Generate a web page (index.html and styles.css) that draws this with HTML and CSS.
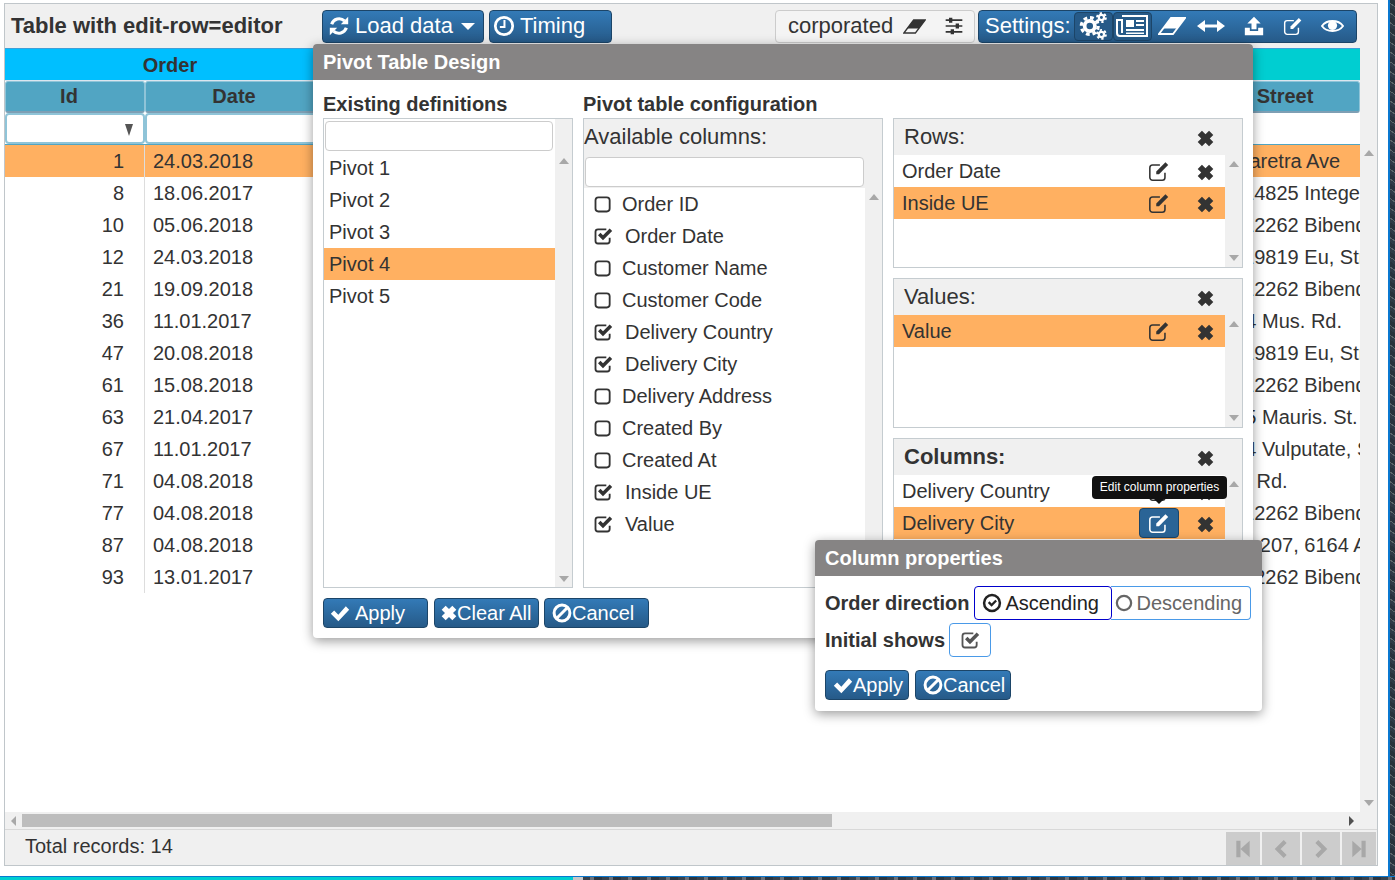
FILE: index.html
```html
<!DOCTYPE html>
<html>
	<head>
		<meta http-equiv="Content-Type" content="text/html; charset=UTF-8" />
		<title>Table with edit-row=editor</title>
		<link rel="stylesheet" href="styles.css">
	</head>

	<body>
		<svg class="defs" xmlns="http://www.w3.org/2000/svg">
			<symbol id="i-x" viewBox="0 0 24 24"><path d="M1 7l6-6 5 5 5-5 6 6-5 5 5 5-6 6-5-5-5 5-6-6 5-5z" fill="currentColor"/></symbol>
			<symbol id="i-edit" viewBox="0 0 24 24"><path d="M18.500 14v5a3 3 0 0 1-3 3H5a3 3 0 0 1-3-3V8.500a3 3 0 0 1 3-3h8" fill="none" stroke="currentColor" stroke-width="1.700"/><path d="M9 12.500L19 2.500l3 3-10 10H9z" fill="currentColor"/></symbol>
			<symbol id="i-check" viewBox="0 0 24 24"><path d="M1 13l4-4 5 5L19 4l4 4-13 14z" fill="currentColor"/></symbol>
			<symbol id="i-ban" viewBox="0 0 24 24"><circle cx="12" cy="12" r="9.500" fill="none" stroke="currentColor" stroke-width="3.600"/><path d="M6 18L18 6" stroke="currentColor" stroke-width="3.600"/></symbol>
			<symbol id="i-refresh" viewBox="0 0 24 24"><path d="M4 10a8.500 8.500 0 0 1 14-3.500" fill="none" stroke="currentColor" stroke-width="3.400"/><path d="M22 2v8h-8z" fill="currentColor"/><path d="M20 14a8.500 8.500 0 0 1-14 3.500" fill="none" stroke="currentColor" stroke-width="3.400"/><path d="M2 22v-8h8z" fill="currentColor"/></symbol>
			<symbol id="i-clock" viewBox="0 0 24 24"><circle cx="12" cy="12" r="9.500" fill="none" stroke="currentColor" stroke-width="3"/><path d="M12.500 5.500v7.500H7.500" fill="none" stroke="currentColor" stroke-width="2.200"/></symbol>
			<symbol id="i-eraser" viewBox="0 0 28 18"><path d="M13 1h14L15 17H1z" fill="none" stroke="currentColor" stroke-width="1.800"/><path d="M13 1h14l-8 10.500H5z" fill="currentColor"/></symbol>
			<symbol id="i-sliders" viewBox="0 0 24 24"><path d="M2 5h20M2 12h20M2 19h20" stroke="currentColor" stroke-width="2"/><path d="M6 2h4v6H6zM14 9h4v6h-4zM8 16h4v6H8z" fill="currentColor"/></symbol>
			<symbol id="i-cogs" viewBox="0 0 30 30"><circle cx="11" cy="15" r="5.500" fill="none" stroke="currentColor" stroke-width="4"/><circle cx="11" cy="15" r="9" fill="none" stroke="currentColor" stroke-width="3.500" stroke-dasharray="4 3.070"/><circle cx="23.500" cy="6" r="2.800" fill="none" stroke="currentColor" stroke-width="2.400"/><circle cx="23.500" cy="6" r="4.800" fill="none" stroke="currentColor" stroke-width="2" stroke-dasharray="2.500 2.530"/><circle cx="23.500" cy="24" r="2.800" fill="none" stroke="currentColor" stroke-width="2.400"/><circle cx="23.500" cy="24" r="4.800" fill="none" stroke="currentColor" stroke-width="2" stroke-dasharray="2.500 2.530"/></symbol>
			<symbol id="i-news" viewBox="0 0 32 24"><path d="M6 2h25v20H4a3 3 0 0 1-3-3V6h5v13" fill="none" stroke="currentColor" stroke-width="2"/><path d="M10 6h8v7h-8zM20 6h8v2h-8zM20 10h8v2h-8zM10 15h18v2H10zM10 18.500h18v1.500H10z" fill="currentColor"/></symbol>
			<symbol id="i-arrows" viewBox="0 0 28 16"><path d="M6 8h16" stroke="currentColor" stroke-width="3"/><path d="M8 2L0 8l8 6zM20 2l8 6-8 6z" fill="currentColor"/></symbol>
			<symbol id="i-upload" viewBox="0 0 24 24"><path d="M12 1l8 8h-5v7H9V9H4z" fill="currentColor"/><path d="M1 14h6v4h10v-4h6v9H1z" fill="currentColor"/></symbol>
			<symbol id="i-eye" viewBox="0 0 24 16"><path d="M1 8C6 1 18 1 23 8C18 15 6 15 1 8z" fill="none" stroke="currentColor" stroke-width="2"/><circle cx="12" cy="7.500" r="4.800" fill="currentColor"/></symbol>
			<symbol id="i-first" viewBox="0 0 20 24"><path d="M2 2h5v20H2zM18 2v20L7 12z" fill="currentColor"/></symbol>
			<symbol id="i-prev" viewBox="0 0 20 24"><path d="M15 3L6 12l9 9" fill="none" stroke="currentColor" stroke-width="5"/></symbol>
			<symbol id="i-next" viewBox="0 0 20 24"><path d="M5 3l9 9-9 9" fill="none" stroke="currentColor" stroke-width="5"/></symbol>
			<symbol id="i-last" viewBox="0 0 20 24"><path d="M13 2h5v20h-5zM2 2v20l11-10z" fill="currentColor"/></symbol>
			<symbol id="i-square" viewBox="0 0 24 24"><rect x="3" y="4" width="17" height="17" rx="3.500" fill="none" stroke="currentColor" stroke-width="2.200"/></symbol>
			<symbol id="i-checked" viewBox="0 0 24 24"><path d="M20 14v4a3 3 0 0 1-3 3H6a3 3 0 0 1-3-3V7a3 3 0 0 1 3-3h10" fill="none" stroke="currentColor" stroke-width="2.200"/><path d="M6 11l3-3 3 3 8-8 3 3-11 11z" fill="currentColor"/></symbol>
			<symbol id="i-circle-check" viewBox="0 0 24 24"><circle cx="12" cy="12" r="9.500" fill="none" stroke="currentColor" stroke-width="3"/><path d="M7 12l2-2 2.500 2.500L16 8l2 2-6.500 6.500z" fill="currentColor"/></symbol>
			<symbol id="i-circle" viewBox="0 0 24 24"><circle cx="12" cy="12" r="9.500" fill="none" stroke="currentColor" stroke-width="3"/></symbol>
		</svg>

		<div class="window">
			<div class="panel">
				<div class="toolbar">
					<div class="title">Table with edit-row=editor</div>
					<button class="btn btn-load"><svg class="ico"><use href="#i-refresh"/></svg>Load data<span class="caret"></span></button>
					<button class="btn btn-timing"><svg class="ico"><use href="#i-clock"/></svg>Timing</button>
					<div class="filter-box">
						<span class="filter-text">corporated</span>
						<svg class="ico ico-rub"><use href="#i-eraser"/></svg>
						<svg class="ico"><use href="#i-sliders"/></svg>
					</div>
					<div class="settings">
						<span class="settings-label">Settings:</span>
						<span class="tool active"><svg class="ico ico-cogs"><use href="#i-cogs"/></svg></span>
						<span class="tool active"><svg class="ico ico-news"><use href="#i-news"/></svg></span>
						<span class="tool t-eraser"><svg class="ico ico-eraser"><use href="#i-eraser"/></svg></span>
						<span class="tool t-arrows"><svg class="ico ico-wide"><use href="#i-arrows"/></svg></span>
						<span class="tool t-upload"><svg class="ico"><use href="#i-upload"/></svg></span>
						<span class="tool t-edit"><svg class="ico"><use href="#i-edit"/></svg></span>
						<span class="tool t-eye"><svg class="ico ico-eye"><use href="#i-eye"/></svg></span>
					</div>
				</div>

				<div class="content">
					<div class="table-wrap">
						<table class="grid">
							<colgroup>
								<col class="c-id"><col class="c-date"><col class="c-gap"><col class="c-fill"><col class="c-street">
							</colgroup>
							<thead>
								<tr class="band">
									<th colspan="3" class="band-order">Order</th>
									<th colspan="2" class="band-delivery"></th>
								</tr>
								<tr class="head">
									<th class="head-id">Id</th><th>Date</th><th colspan="2"></th><th>Street</th>
								</tr>
								<tr class="filters">
									<td><span class="filter-cell"><span class="arrow-down"></span></span></td>
									<td><span class="filter-cell"></span></td>
									<td colspan="2"></td>
									<td></td>
								</tr>
							</thead>
							<tbody>
								<tr class="sel"><td class="id">1</td><td class="date">24.03.2018</td><td colspan="2"></td><td class="street">Viaretra Ave</td></tr>
								<tr><td class="id">8</td><td class="date">18.06.2017</td><td colspan="2"></td><td class="street">#14825 Integer Rd.</td></tr>
								<tr><td class="id">10</td><td class="date">05.06.2018</td><td colspan="2"></td><td class="street">#12262 Bibendum St.</td></tr>
								<tr><td class="id">12</td><td class="date">24.03.2018</td><td colspan="2"></td><td class="street">#19819 Eu, Street</td></tr>
								<tr><td class="id">21</td><td class="date">19.09.2018</td><td colspan="2"></td><td class="street">#12262 Bibendum St.</td></tr>
								<tr><td class="id">36</td><td class="date">11.01.2017</td><td colspan="2"></td><td class="street">A4 Mus. Rd.</td></tr>
								<tr><td class="id">47</td><td class="date">20.08.2018</td><td colspan="2"></td><td class="street">#19819 Eu, Street</td></tr>
								<tr><td class="id">61</td><td class="date">15.08.2018</td><td colspan="2"></td><td class="street">#12262 Bibendum St.</td></tr>
								<tr><td class="id">63</td><td class="date">21.04.2017</td><td colspan="2"></td><td class="street">A5 Mauris. St.</td></tr>
								<tr><td class="id">67</td><td class="date">11.01.2017</td><td colspan="2"></td><td class="street">A4 Vulputate, Street</td></tr>
								<tr><td class="id">71</td><td class="date">04.08.2018</td><td colspan="2"></td><td class="street">Hi Rd.</td></tr>
								<tr><td class="id">77</td><td class="date">04.08.2018</td><td colspan="2"></td><td class="street">#12262 Bibendum St.</td></tr>
								<tr><td class="id">87</td><td class="date">04.08.2018</td><td colspan="2"></td><td class="street">12.207, 6164 Ave</td></tr>
								<tr><td class="id">93</td><td class="date">13.01.2017</td><td colspan="2"></td><td class="street">#12262 Bibendum St.</td></tr>
							</tbody>
						</table>
					</div>
					<div class="vscroll"><span class="arrow-up"></span><span class="arrow-down"></span></div>
				</div>

				<div class="hscroll">
					<span class="arrow-left"></span>
					<span class="thumb"></span>
					<span class="arrow-right"></span>
				</div>

				<div class="footer">
					<span class="total">Total records: 14</span>
					<div class="pager">
						<span class="page-btn p-first"><svg class="ico"><use href="#i-first"/></svg></span>
						<span class="page-btn p-prev"><svg class="ico"><use href="#i-prev"/></svg></span>
						<span class="page-btn p-next"><svg class="ico"><use href="#i-next"/></svg></span>
						<span class="page-btn p-last"><svg class="ico"><use href="#i-last"/></svg></span>
					</div>
				</div>
			</div>

			<!-- pivot dialog -->
			<div class="dialog pivot">
				<div class="dialog-title">Pivot Table Design</div>
				<div class="pivot-body">
					<div class="col-existing">
						<h4>Existing definitions</h4>
						<div class="box existing">
							<div class="box-main">
								<input class="search" type="text" />
								<div class="item">Pivot 1</div>
								<div class="item">Pivot 2</div>
								<div class="item">Pivot 3</div>
								<div class="item sel">Pivot 4</div>
								<div class="item">Pivot 5</div>
							</div>
							<div class="box-scroll"><span class="arrow-up"></span><span class="arrow-down"></span></div>
						</div>
					</div>
					<div class="col-config">
						<h4>Pivot table configuration</h4>
						<div class="config">
							<div class="box available">
								<div class="box-head">Available columns:</div>
								<input class="search" type="text" />
								<div class="avail-body">
									<div class="box-main">
										<div class="opt"><svg class="ico"><use href="#i-square"/></svg>Order ID</div>
										<div class="opt on"><svg class="ico"><use href="#i-checked"/></svg>Order Date</div>
										<div class="opt"><svg class="ico"><use href="#i-square"/></svg>Customer Name</div>
										<div class="opt"><svg class="ico"><use href="#i-square"/></svg>Customer Code</div>
										<div class="opt on"><svg class="ico"><use href="#i-checked"/></svg>Delivery Country</div>
										<div class="opt on"><svg class="ico"><use href="#i-checked"/></svg>Delivery City</div>
										<div class="opt"><svg class="ico"><use href="#i-square"/></svg>Delivery Address</div>
										<div class="opt"><svg class="ico"><use href="#i-square"/></svg>Created By</div>
										<div class="opt"><svg class="ico"><use href="#i-square"/></svg>Created At</div>
										<div class="opt on"><svg class="ico"><use href="#i-checked"/></svg>Inside UE</div>
										<div class="opt on"><svg class="ico"><use href="#i-checked"/></svg>Value</div>
									</div>
									<div class="box-scroll"><span class="arrow-up"></span></div>
								</div>
							</div>
							<div class="zones">
								<div class="box zone">
									<div class="zone-head">Rows:<svg class="ico ico-x"><use href="#i-x"/></svg></div>
									<div class="zone-body">
										<div class="box-main">
											<div class="zone-row"><span class="zone-label">Order Date</span><span class="edit-btn"><svg class="ico"><use href="#i-edit"/></svg></span><svg class="ico ico-x"><use href="#i-x"/></svg></div>
											<div class="zone-row sel"><span class="zone-label">Inside UE</span><span class="edit-btn"><svg class="ico"><use href="#i-edit"/></svg></span><svg class="ico ico-x"><use href="#i-x"/></svg></div>
										</div>
										<div class="box-scroll"><span class="arrow-up"></span><span class="arrow-down"></span></div>
									</div>
								</div>
								<div class="box zone">
									<div class="zone-head">Values:<svg class="ico ico-x"><use href="#i-x"/></svg></div>
									<div class="zone-body">
										<div class="box-main">
											<div class="zone-row sel"><span class="zone-label">Value</span><span class="edit-btn"><svg class="ico"><use href="#i-edit"/></svg></span><svg class="ico ico-x"><use href="#i-x"/></svg></div>
										</div>
										<div class="box-scroll"><span class="arrow-up"></span><span class="arrow-down"></span></div>
									</div>
								</div>
								<div class="box zone">
									<div class="zone-head strong">Columns:<svg class="ico ico-x"><use href="#i-x"/></svg></div>
									<div class="zone-body">
										<div class="box-main">
											<div class="zone-row"><span class="zone-label">Delivery Country</span><span class="edit-btn"><svg class="ico"><use href="#i-edit"/></svg></span><svg class="ico ico-x"><use href="#i-x"/></svg></div>
											<div class="zone-row sel"><span class="zone-label">Delivery City</span><span class="edit-btn hot"><svg class="ico"><use href="#i-edit"/></svg></span><svg class="ico ico-x"><use href="#i-x"/></svg></div>
										</div>
										<div class="box-scroll"><span class="arrow-up"></span></div>
									</div>
								</div>
							</div>
						</div>
					</div>
				</div>
				<div class="actions">
					<button class="btn btn-sm b-apply"><svg class="ico"><use href="#i-check"/></svg>Apply</button>
					<button class="btn btn-sm b-clear"><svg class="ico"><use href="#i-x"/></svg>Clear All</button>
					<button class="btn btn-sm b-cancel"><svg class="ico"><use href="#i-ban"/></svg>Cancel</button>
				</div>
			</div>

			<div class="tooltip">Edit column properties</div>

			<!-- column properties -->
			<div class="dialog props">
				<div class="dialog-title">Column properties</div>
				<div class="props-body">
					<div class="prop-row">
						<b>Order direction</b>
						<div class="segment">
							<span class="seg seg-on"><svg class="ico"><use href="#i-circle-check"/></svg>Ascending</span>
							<span class="seg seg-off"><svg class="ico"><use href="#i-circle"/></svg>Descending</span>
						</div>
					</div>
					<div class="prop-row prop-shows">
						<b>Initial shows</b>
						<span class="toggle"><svg class="ico"><use href="#i-checked"/></svg></span>
					</div>
					<div class="prop-actions">
						<button class="btn btn-sm p-apply"><svg class="ico"><use href="#i-check"/></svg>Apply</button>
						<button class="btn btn-sm p-cancel"><svg class="ico"><use href="#i-ban"/></svg>Cancel</button>
					</div>
				</div>
			</div>
		</div>

		<div class="strip"><span class="strip-teal"></span><span class="strip-gray"></span><span class="strip-dark"></span></div>
	</body>
</html>
```

FILE: styles.css
```css
html, body {
	margin: 0;
	height: 880px;
	overflow: hidden;
}
body {
	background: repeating-linear-gradient(35deg, #2f3a46 0 3px, #5c666a 3px 4px, #28323c 4px 8px);
	color: #333;
	font-family: "Liberation Sans", Arial, sans-serif;
	font-size: 20px;
}
.defs {
	display: none;
}
.ico {
	display: block;
	flex: none;
	width: 20px;
	height: 20px;
}

/* window */
.window {
	position: relative;
	box-sizing: border-box;
	width: 1390px;
	height: 876px;
	padding: 3px 11px 10px 4px;
	background: #fff;
	border-right: 2px solid #0a78d0;
}
.strip {
	display: flex;
	height: 4px;
	border-top: 1px solid #0a78d0;
	box-sizing: border-box;
}
.strip-teal {
	width: 573px;
	background: #00ced1;
}
.strip-gray {
	width: 10px;
	background: #c8c8c8;
}
.strip-dark {
	flex: 1;
	background: repeating-linear-gradient(90deg, #39424c 0 7px, #6b7078 7px 11px, #2c3640 11px 19px);
}

/* panel */
.panel {
	box-sizing: border-box;
	display: flex;
	flex-direction: column;
	width: 1374px;
	height: 863px;
	border: 1px solid #c0c6ca;
}
.toolbar {
	display: flex;
	align-items: center;
	flex: none;
	height: 44px;
	padding: 0 20px 0 6px;
	background: #f0f0f0;
}
.title {
	width: 311px;
	font-size: 22px;
	font-weight: bold;
	white-space: nowrap;
}
.btn {
	display: flex;
	align-items: center;
	box-sizing: border-box;
	height: 33px;
	margin: 0;
	padding: 0;
	background: linear-gradient(#337ab7, #265a88);
	border: 1px solid #1c4568;
	border-radius: 4px;
	color: #fff;
	font-family: inherit;
	font-size: 22px;
}
.btn-load {
	width: 162px;
	padding-left: 5px;
}
.btn-load .ico, .btn-timing .ico {
	width: 22px;
	height: 22px;
	margin-right: 5px;
}
.btn-timing {
	width: 123px;
	margin-left: 5px;
	padding-left: 3px;
}
.caret {
	margin-left: 8px;
	border-top: 7px solid #fff;
	border-left: 7px solid transparent;
	border-right: 7px solid transparent;
}
.filter-box {
	display: flex;
	align-items: center;
	box-sizing: border-box;
	width: 200px;
	height: 33px;
	margin-left: auto;
	padding: 0 10px 0 12px;
	background: #f4f4f4;
	border: 1px solid #ccc;
	border-radius: 4px;
	font-size: 22px;
}
.filter-text {
	margin-right: 10px;
}
.ico-rub {
	width: 23px;
	height: 15px;
}
.filter-box .ico + .ico {
	margin-left: 18px;
}
.settings {
	display: flex;
	align-items: center;
	box-sizing: border-box;
	width: 379px;
	height: 33px;
	margin-left: 3px;
	padding-left: 6px;
	background: linear-gradient(#337ab7, #265a88);
	border: 1px solid #1c4568;
	border-radius: 4px;
	color: #fff;
	font-size: 22px;
}
.settings-label {
	margin-right: 3px;
}
.tool {
	display: flex;
	align-items: center;
	justify-content: center;
	flex: none;
}
.tool.active {
	box-sizing: border-box;
	width: 39px;
	height: 29px;
	background: #265a88;
	border: 1px solid #1c4568;
	border-radius: 4px;
}
.ico-cogs {
	width: 31px;
	height: 28px;
}
.ico-news {
	width: 32px;
	height: 24px;
}
.ico-eraser {
	width: 28px;
	height: 18px;
}
.ico-wide {
	width: 28px;
	height: 16px;
}
.ico-eye {
	width: 23px;
	height: 16px;
}
.t-eraser {
	margin-left: 6px;
}
.t-arrows {
	margin-left: 11px;
}
.t-upload {
	margin-left: 19px;
}
.t-edit {
	margin-left: 19px;
}
.t-eye {
	margin-left: 18px;
}

/* table */
.content {
	display: flex;
	flex: 1;
	min-height: 0;
}
.table-wrap {
	width: 1355px;
	overflow: hidden;
}
.grid {
	width: 1355px;
	table-layout: fixed;
	border-collapse: separate;
	border-spacing: 0;
}
.c-id {
	width: 140px;
}
.c-date {
	width: 178px;
}
.c-gap {
	width: 12px;
}
.c-street {
	width: 150px;
}
.grid th, .grid td {
	height: 32px;
	padding: 0;
	box-sizing: border-box;
	white-space: nowrap;
	overflow: hidden;
}
.grid .band th {
	height: 33px;
	padding-top: 2px;
	border-top: 1px solid #3ea0d8;
	border-bottom: 1px solid #dbe6f0;
}
.band-order {
	background: #00bfff;
	font-weight: bold;
}
.band-delivery {
	background: #00ced1;
}
.head th {
	background: #51a5c3;
	border: 1px solid #8fc4d8;
	border-bottom: 2px solid #7e9fb4;
	border-radius: 3px;
}
.head .head-id {
	padding-right: 12px;
}
.filters td {
	border-bottom: 1px solid #51a5c3;
}
.filter-cell {
	position: relative;
	display: block;
	box-sizing: border-box;
	height: 31px;
	background: #fff;
	border: 2px solid #8fc4d8;
	border-radius: 4px;
}
.filter-cell .arrow-down {
	position: absolute;
	right: 10px;
	top: 9px;
	border-top: 12px solid #555;
	border-left: 4px solid transparent;
	border-right: 4px solid transparent;
}
.grid tbody tr.sel td {
	background: #ffb061;
}
.id {
	padding-right: 20px !important;
	text-align: right;
	border-right: 1px solid #ddd;
}
.date {
	padding-left: 8px !important;
}
.street {
	padding-left: 22px !important;
}

/* scrollbars */
.vscroll {
	display: flex;
	flex-direction: column;
	justify-content: space-between;
	align-items: center;
	box-sizing: border-box;
	width: 17px;
	padding: 102px 0 6px;
	background: #f0f0f0;
}
.arrow-up, .arrow-down {
	display: block;
	border-left: 5px solid transparent;
	border-right: 5px solid transparent;
}
.arrow-up {
	border-bottom: 6px solid #a8a8a8;
}
.arrow-down {
	border-top: 6px solid #a8a8a8;
}
.hscroll {
	position: relative;
	flex: none;
	height: 17px;
	background: #f0f0f0;
}
.thumb {
	position: absolute;
	left: 17px;
	top: 2px;
	width: 810px;
	height: 13px;
	background: #bdbdbd;
}
.arrow-left, .arrow-right {
	position: absolute;
	top: 4px;
	border-top: 5px solid transparent;
	border-bottom: 5px solid transparent;
}
.arrow-left {
	left: 6px;
	border-right: 5px solid #a8a8a8;
}
.arrow-right {
	left: 1344px;
	border-left: 5px solid #505050;
}
.footer {
	display: flex;
	align-items: center;
	justify-content: space-between;
	box-sizing: border-box;
	flex: none;
	height: 36px;
	padding: 0 1px 0 20px;
	background: #f0f0f0;
	border-top: 1px solid #d8d8d8;
}
.total {
	margin-bottom: 2px;
}
.pager {
	display: flex;
	gap: 2px;
	align-self: flex-end;
}
.page-btn {
	display: flex;
	align-items: center;
	justify-content: center;
	height: 33px;
	background: #ccc;
	color: #a8a8a8;
}
.p-first {
	width: 34px;
}
.p-last {
	width: 34px;
}
.p-prev, .p-next {
	width: 38px;
}

/* dialogs */
.dialog {
	position: absolute;
	box-sizing: border-box;
	background: #fff;
	border-radius: 4px;
	box-shadow: 0 3px 12px rgba(0, 0, 0, 0.4);
}
.dialog-title {
	box-sizing: border-box;
	background: #868484;
	color: #fff;
	font-weight: bold;
	border-radius: 4px 4px 0 0;
	padding-left: 10px;
}
.pivot {
	left: 313px;
	top: 44px;
	width: 940px;
	height: 594px;
}
.pivot .dialog-title {
	height: 36px;
	line-height: 36px;
}
.pivot-body {
	display: flex;
	gap: 10px;
	padding: 14px 10px 0;
}
h4 {
	margin: 0 0 4px;
	height: 20px;
	font-size: 20px;
	line-height: 20px;
}
.col-existing {
	width: 250px;
}
.col-config {
	width: 660px;
}
.config {
	display: flex;
	gap: 10px;
}
.box {
	box-sizing: border-box;
	background: #f0f0f0;
	border: 1px solid #c5ccd0;
}
.box-main {
	flex: 1;
	min-width: 0;
	background: #fff;
}
.box-scroll {
	display: flex;
	flex-direction: column;
	justify-content: space-between;
	align-items: center;
	box-sizing: border-box;
	flex: none;
	width: 17px;
	padding: 6px 0;
}
.search {
	display: block;
	box-sizing: border-box;
	height: 30px;
	margin: 0;
	padding: 0;
	background: #fff;
	border: 1px solid #ccc;
	border-radius: 4px;
}
.existing {
	display: flex;
	width: 250px;
	height: 470px;
}
.existing .search {
	width: 228px;
	margin: 2px 1px 1px;
}
.existing .box-scroll {
	padding: 39px 0 5px;
}
.item {
	height: 32px;
	padding-left: 5px;
	line-height: 32px;
}
.item.sel, .zone-row.sel {
	background: #ffb061;
}
.available {
	display: flex;
	flex-direction: column;
	flex: none;
	width: 300px;
	height: 470px;
}
.box-head {
	height: 36px;
	font-size: 22px;
	line-height: 35px;
}
.available .search {
	width: 279px;
	margin: 2px 0 0 1px;
	flex: none;
}
.avail-body {
	display: flex;
	flex: 1;
	min-height: 0;
	padding-top: 1px;
}
.available .box-scroll {
	padding-top: 6px;
}
.opt {
	display: flex;
	align-items: center;
	height: 32px;
	padding-left: 9px;
}
.opt .ico {
	margin-right: 9px;
}
.opt.on .ico {
	margin-right: 12px;
}
.zones {
	display: flex;
	flex-direction: column;
	gap: 10px;
	width: 350px;
}
.zone {
	display: flex;
	flex-direction: column;
	height: 150px;
}
.zone-head {
	display: flex;
	align-items: center;
	justify-content: space-between;
	box-sizing: border-box;
	flex: none;
	height: 36px;
	padding: 0 28px 0 10px;
	font-size: 22px;
}
.zone-head.strong {
	font-weight: bold;
}
.zone-head .ico-x, .zone-row .ico-x {
	width: 17px;
	height: 17px;
}
.zone-head .ico-x {
	margin-top: 3px;
}
.zone-body {
	display: flex;
	flex: 1;
	min-height: 0;
}
.zone-row {
	display: flex;
	align-items: center;
	height: 32px;
	padding-left: 8px;
}
.zone-label {
	flex: 1;
}
.zone-row .ico-x {
	margin: 2px 11px 0 18px;
}
.edit-btn {
	display: flex;
	align-items: center;
	justify-content: center;
	box-sizing: border-box;
	width: 40px;
	height: 30px;
	border-radius: 4px;
}
.edit-btn .ico {
	width: 22px;
	height: 22px;
}
.edit-btn.hot {
	background: #2a6496;
	border: 1px solid #1c4568;
	color: #fff;
}
.actions {
	display: flex;
	position: absolute;
	left: 10px;
	top: 554px;
}
.btn-sm {
	height: 30px;
	font-size: 20px;
}
.btn-sm .ico {
	margin-right: 0;
}
.b-apply {
	width: 105px;
	padding-left: 6px;
}
.b-apply .ico {
	margin-right: 5px;
}
.b-clear {
	width: 105px;
	margin-left: 6px;
	padding-left: 6px;
}
.b-clear .ico {
	width: 16px;
	height: 16px;
}
.b-cancel {
	width: 105px;
	margin-left: 5px;
	padding-left: 7px;
}

/* tooltip */
.tooltip {
	position: absolute;
	left: 1092px;
	top: 476px;
	box-sizing: border-box;
	width: 135px;
	height: 23px;
	background: #111;
	border-radius: 4px;
	color: #fff;
	font-size: 12px;
	line-height: 23px;
	text-align: center;
}
.tooltip::after {
	content: "";
	position: absolute;
	left: 62px;
	top: 23px;
	border-top: 5px solid #111;
	border-left: 5px solid transparent;
	border-right: 5px solid transparent;
}

/* column properties */
.props {
	left: 815px;
	top: 540px;
	width: 447px;
	height: 171px;
}
.props .dialog-title {
	height: 36px;
	line-height: 36px;
}
.props-body {
	padding: 10px 10px 0;
}
.prop-row {
	display: flex;
	align-items: center;
	height: 34px;
}
.prop-row b {
	flex: none;
	white-space: nowrap;
}
.segment {
	display: flex;
	flex: none;
	margin-left: 5px;
	height: 34px;
}
.seg {
	display: flex;
	align-items: center;
	box-sizing: border-box;
	font-size: 20px;
}
.seg-on {
	width: 138px;
	padding-left: 7px;
	border: 1px solid #0000cc;
	border-radius: 4px;
	color: #222;
}
.seg-on .ico {
	width: 20px;
	margin-right: 3px;
}
.seg-off {
	width: 140px;
	margin-left: -1px;
	padding-left: 4px;
	border: 1px solid #4a9ae8;
	border-left: 0;
	border-radius: 0 4px 4px 0;
	color: #666;
}
.seg-off .ico {
	width: 18px;
	margin-right: 3px;
}
.prop-shows {
	margin-top: 3px;
}
.toggle {
	display: flex;
	align-items: center;
	justify-content: center;
	box-sizing: border-box;
	width: 42px;
	height: 34px;
	margin-left: 4px;
	border: 1px solid #4a9ae8;
	border-radius: 4px;
	color: #555;
}
.prop-actions {
	display: flex;
	gap: 6px;
	margin-top: 13px;
}
.p-apply {
	width: 84px;
	padding-left: 7px;
}
.p-cancel {
	width: 96px;
	padding-left: 7px;
}
```
